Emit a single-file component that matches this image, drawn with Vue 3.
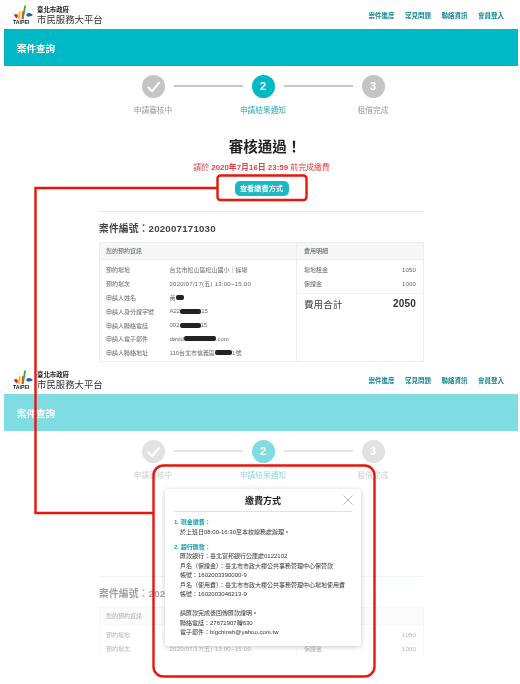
<script setup>
const nav = ['案件進度', '常見問題', '聯絡資訊', '會員登入']
const steps = [
  { label: '申請審核中', state: 'done' },
  { label: '申請結果通知', state: 'active' },
  { label: '租借完成', state: 'todo' }
]
const panels = [
  {
    dim: false,
    caseNo: '案件編號：202007171030',
    rows: [
      { k: '預約場地', v: '台北市松山區松山國小｜操場' },
      { k: '預約場次', v: '2020/07/17(五) 13:00~15:00' },
      { k: '申請人姓名', a: '黃', m: 8 },
      { k: '申請人身分證字號', a: 'A22', m: 21, b: '15' },
      { k: '申請人聯絡電話', a: '092', m: 21, b: '15' },
      { k: '申請人電子郵件', a: 'david', m: 32, b: '.com' },
      { k: '申請人聯絡地址', a: '110台北市信義區', m: 17, b: '1號' }
    ],
    fees: [
      { k: '場地租金', v: '1050' },
      { k: '保證金', v: '1000' }
    ]
  },
  {
    dim: true,
    caseNo: '案件編號：202',
    rows: [
      { k: '預約場地' },
      { k: '預約場次', v: '2020/07/17(五) 13:00~15:00' }
    ],
    fees: [
      { k: '', v: '1050' },
      { k: '保證金', v: '1000' }
    ]
  }
]
</script>

<template>
  <div class="page">
    <section v-for="(p, i) in panels" :key="i" class="panel" :class="{ second: p.dim }">
      <header class="top">
        <div class="brand">
          <svg class="logo" viewBox="0 0 21 20" width="21" height="20">
            <path d="M7 6.5 5.8 14" stroke="#f5c400" stroke-width="1.9" fill="none" />
            <path d="M12.2 0.5 9.8 14" stroke="#35a83a" stroke-width="1.7" fill="none" />
            <path d="M9.8 6 9 14" stroke="#e5332a" stroke-width="1" fill="none" />
            <path d="M0.8 10 Q3.5 7.5 5.2 11 L3.5 13.5 Z" fill="#d8262c" />
            <path d="M13.5 9 Q16.5 6.8 20 10 Q16.5 12.5 13.5 11 Z" fill="#1565b5" />
            <text x="0" y="19.3" class="taipei">TAIPEI</text>
          </svg>
          <div class="names">
            <div class="gov">臺北市政府</div>
            <div class="site">市民服務大平台</div>
          </div>
        </div>
        <nav class="nav"><a v-for="n in nav" :key="n">{{ n }}</a></nav>
      </header>

      <div class="body">
        <div class="banner">案件查詢</div>

        <div class="track">
          <template v-for="(s, si) in steps" :key="s.label">
            <span class="dot" :class="s.state">
              <svg v-if="s.state === 'done'" viewBox="0 0 24 24" width="23" height="23">
                <path d="M6 12.5 10.5 17 18.5 7.5" fill="none" stroke="#fff" stroke-width="2.2" />
              </svg>
              <template v-else>{{ si + 1 }}</template>
            </span>
            <span v-if="si < 2" class="link"></span>
          </template>
        </div>
        <div class="labels">
          <span v-for="s in steps" :key="s.label" :class="s.state">{{ s.label }}</span>
        </div>

        <div class="result">
          <template v-if="!p.dim">
            <h1 class="title">審核通過！</h1>
            <p class="due">請於 <b>2020年7月16日 23:59</b> 前完成繳費</p>
            <div class="cta"><button class="pay">查看繳費方式</button></div>
          </template>
        </div>
        <div class="rule"></div>

        <h2 class="case">{{ p.caseNo }}</h2>
        <div class="table">
          <div class="left">
            <div class="thead">您的預約資訊</div>
            <div class="rows">
              <div v-for="r in p.rows" :key="r.k" class="row">
                <span class="k">{{ r.k }}</span>
                <span class="v" :class="{ digits: r.v && r.v.startsWith('2020') }">
                  <template v-if="r.v">{{ r.v }}</template>
                  <template v-else-if="r.a">{{ r.a }}<i class="mask" :style="{ width: r.m + 'px' }"></i>{{ r.b }}</template>
                </span>
              </div>
            </div>
          </div>
          <div class="right">
            <div class="thead"><template v-if="!p.dim">費用明細</template></div>
            <div class="fees">
              <div v-for="f in p.fees" :key="f.v" class="fee"><span>{{ f.k }}</span><b>{{ f.v }}</b></div>
            </div>
            <div v-if="!p.dim" class="sum"><span>費用合計</span><b>2050</b></div>
          </div>
        </div>

        <div v-if="p.dim" class="veil"></div>
      </div>

      <aside v-if="p.dim" class="modal">
        <div class="mhead">
          <h3>繳費方式</h3>
          <svg class="close" viewBox="0 0 10 10" width="10" height="10">
            <path d="M.5.5l9 9M9.5.5l-9 9" stroke="#9a9a9a" stroke-width=".7" fill="none" />
          </svg>
        </div>
        <div class="mbody">
          <div class="mt">1. 現金繳費：</div>
          <div class="md">於上班日08:00-16:30至本校總務處辦理。</div>
          <div class="mt gap">2. 銀行匯款：</div>
          <div class="md">匯款銀行：臺北富邦銀行公庫處0122102</div>
          <div class="md">戶名（保證金）：臺北市市政大樓公共事務管理中心保管款</div>
          <div class="md">帳號：1602003390000-9</div>
          <div class="md">戶名（使用費）：臺北市市政大樓公共事務管理中心場地使用費</div>
          <div class="md">帳號：1602003046213-9</div>
          <div class="md gap">請匯款完成後回傳匯款證明。</div>
          <div class="md">聯絡電話：27672907轉630</div>
          <div class="md">電子郵件：bigchinsh@yahoo.com.tw</div>
        </div>
      </aside>
    </section>

    <svg class="marks" viewBox="0 0 520 684" width="520" height="684">
      <rect x="217.5" y="175.5" width="89" height="24.5" rx="3" />
      <rect x="153.5" y="465.5" width="221" height="211" rx="10" />
      <path d="M217 188H35.5V513H153" />
    </svg>
  </div>
</template>

<style scoped>
.page {
  position: relative;
  width: 520px;
  height: 684px;
  overflow: hidden;
  background: #fff;
  color: #333;
  font-family: "Liberation Sans", "Noto Sans CJK TC", sans-serif;
  filter: blur(0.35px);
}
.panel { position: relative; height: 365px; overflow: hidden; }
.panel.second { height: 292px; overflow: visible; }
.panel.second .body { position: relative; }

.top {
  height: 29px;
  display: flex;
  justify-content: space-between;
  align-items: center;
  padding: 0 16px 0 13px;
}
.brand { display: flex; align-items: center; gap: 3px; }
.logo { display: block; }
.taipei { font: 700 5.2px "Liberation Sans", sans-serif; fill: #222; }
.gov { font-size: 6.4px; font-weight: 700; line-height: 9px; color: #222; }
.site { font-size: 9.4px; line-height: 11px; color: #333; }
.nav { display: flex; gap: 10.5px; }
.nav a { font-size: 6.5px; font-weight: 700; color: #14868f; }

.banner {
  height: 37px;
  margin: 0 2px 0 4px;
  padding-left: 13px;
  display: flex;
  align-items: center;
  background: #00b9c7;
  color: #fff;
  font-size: 9.5px;
  font-weight: 700;
}

.track {
  margin-top: 8.5px;
  display: flex;
  align-items: center;
  justify-content: center;
  gap: 9px;
  padding-left: 6px;
}
.dot {
  width: 23px;
  height: 23px;
  border-radius: 50%;
  display: flex;
  align-items: center;
  justify-content: center;
  color: #fff;
  font-size: 11px;
  font-weight: 700;
  background: #c4c4c4;
}
.dot.active { background: #00b9c7; }
.link { width: 69px; height: 1.5px; background: #c9c9c9; }

.labels {
  margin-top: 8px;
  display: flex;
  justify-content: center;
  padding-left: 6px;
  font-size: 7.7px;
  line-height: 10px;
  color: #999;
}
.labels span { width: 110px; text-align: center; }
.labels .active { color: #2aa9b4; }

.result { height: 80px; padding-top: 19px; box-sizing: border-box; }
.title {
  margin: 0;
  font-size: 14.5px;
  line-height: 24px;
  font-weight: 700;
  text-align: center;
  color: #222;
  padding-left: 10px;
}
.due {
  margin: 4px 0 0;
  font-size: 7.9px;
  line-height: 10px;
  text-align: center;
  color: #e5404a;
  padding-left: 3px;
}
.cta { margin-top: 8px; display: flex; justify-content: center; padding-left: 3px; }
.pay {
  width: 54px;
  height: 15px;
  padding: 0;
  border: 0;
  border-radius: 5px;
  background: #1db8c4;
  color: #fff;
  font: 700 7.2px "Noto Sans CJK TC", sans-serif;
}
.rule { margin: 15px 96px 0 99px; height: 1px; background: #d9eef0; }

.case {
  margin: 10px 0 0 99px;
  font-size: 9.7px;
  line-height: 14px;
  font-weight: 700;
  color: #444;
  letter-spacing: .22px;
}
.table {
  margin: 6px 96px 0 99px;
  height: 120px;
  display: flex;
  border: 1px solid #eee;
  box-sizing: border-box;
  font-size: 6px;
  color: #666;
}
.second .table { height: 50px; border-bottom: 0; }
.left { width: 196px; border-right: 1px solid #eee; flex: none; }
.right { flex: 1; }
.thead {
  height: 16px;
  padding-left: 6px;
  display: flex;
  align-items: center;
  background: #f7f7f7;
  border-bottom: 1px solid #eee;
  color: #4a5a5a;
}
.right .thead { padding-left: 7px; }
.rows { padding-top: 3.5px; }
.row { height: 13.8px; padding-left: 6px; display: flex; align-items: center; }
.k { width: 63.5px; flex: none; }
.v { display: flex; align-items: center; white-space: nowrap; }
.v.digits { letter-spacing: .25px; }
.mask {
  display: inline-block;
  height: 5px;
  background: #222;
  border-radius: 2px;
  filter: blur(.5px);
}
.fees { padding: 3.5px 7px 2px; }
.page > .panel:first-child .fees { border-bottom: 1.5px solid #f2f2f2; }
.fee { height: 13.8px; display: flex; justify-content: space-between; align-items: center; }
.fee b { font-weight: 400; letter-spacing: .15px; }
.sum {
  padding: 3px 7px 0;
  display: flex;
  justify-content: space-between;
  align-items: center;
  font-size: 9.6px;
  color: #444;
}
.sum b { font-size: 10px; font-weight: 700; letter-spacing: .2px; color: #333; }

.veil { position: absolute; inset: 0; background: rgba(255, 255, 255, .5); }

.modal {
  position: absolute;
  left: 165px;
  top: 124px;
  width: 196px;
  height: 157px;
  background: #fff;
  border-radius: 3px;
  box-shadow: 0 1px 5px rgba(0, 0, 0, .22);
}
.mhead {
  position: relative;
  margin: 0 9px;
  height: 22px;
  border-bottom: 1px solid #c9eaee;
  display: flex;
  align-items: center;
  justify-content: center;
}
.mhead h3 { margin: 0; font-size: 9px; font-weight: 700; color: #222; }
.close { position: absolute; right: -1px; top: 6px; }
.mbody { padding: 6px 9px 0; font-size: 6px; line-height: 9.5px; color: #333; }
.mt { color: #14a2ae; font-weight: 700; }
.md { padding-left: 6px; white-space: nowrap; }
.gap { margin-top: 5.6px; }
.md.gap { margin-top: 9.5px; }

.marks { position: absolute; left: 0; top: 0; pointer-events: none; }
.marks rect, .marks path { fill: none; stroke: #e8160c; stroke-width: 2.4; }
</style>
